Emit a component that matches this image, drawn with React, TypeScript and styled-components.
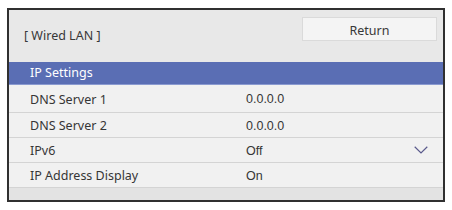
import styled, { createGlobalStyle } from "styled-components";

const GlobalStyle = createGlobalStyle`
    html, body {
        margin: 0;
        padding: 0;
        background: #FFFFFF;
    }
`;

const Page = styled.div`
    padding: 8px 0 0 7px;
`;
const Frame = styled.div`
    width: 434px;
    height: 190px;
    border: 2px solid #303030;
    display: flex;
    flex-direction: column;
    background: #EFEFEF;
    font-family: "Noto Sans", "Open Sans", sans-serif;
`;
const Header = styled.div`
    display: flex;
    justify-content: space-between;
    align-items: flex-start;
    height: 52px;
    padding: 7px 6px 0 15px;
    box-sizing: border-box;
    background: #E8E8E8;
`;
const Title = styled.div`
    margin-top: 12px;
    font-size: 12.5px;
    line-height: 14px;
    color: #383838;
`;
const ReturnButton = styled.button`
    width: 135px;
    height: 24px;
    padding: 0;
    background: #F4F4F4;
    border: 1px solid #DADADA;
    font-family: "Noto Sans", "Open Sans", sans-serif;
    font-size: 12.5px;
    color: #383838;
    padding-top: 2px;
`;
const Section = styled.div`
    height: 22px;
    line-height: 22px;
    padding-left: 21px;
    background: #5A6EB4;
    border-bottom: 1px solid #8A9AD0;
    color: #FFFFFF;
    font-size: 12.5px;
`;
const Row = styled.div<{ $tall?: boolean }>`
    display: grid;
    grid-template-columns: 216px 1fr 40px;
    align-items: center;
    height: ${p => (p.$tall ? 27 : 24)}px;
    padding-left: 21px;
    border-bottom: 1px solid #D4D4D4;
    background: #F1F1F1;
`;
const Label = styled.div`
    font-size: 12.5px;
    color: #363636;
    padding-top: 1px;
`;
const Value = styled.div`
    font-family: "Liberation Sans", Arial, sans-serif;
    font-size: 12.5px;
    color: #363636;
    padding-top: 1px;
`;
const Chevron = styled.svg`
    width: 14px;
    height: 8px;
    margin-left: 11px;
`;
const Footer = styled.div`
    flex: 1;
    background: #E3E3E3;
`;

const rows = [
    { label: "DNS Server 1", value: "0.0.0.0" },
    { label: "DNS Server 2", value: "0.0.0.0" },
    { label: "IPv6", value: "Off", select: true },
    { label: "IP Address Display", value: "On" },
];

function App() {
    return (
        <Page>
            <GlobalStyle />
            <Frame>
                <Header>
                    <Title>[ Wired LAN ]</Title>
                    <ReturnButton>Return</ReturnButton>
                </Header>
                <Section>IP Settings</Section>
                {rows.map((r, i) => (
                    <Row key={r.label} $tall={i === 0}>
                        <Label>{r.label}</Label>
                        <Value>{r.value}</Value>
                        {r.select ? (
                            <Chevron viewBox="0 0 14 8">
                                <path d="M0.7 0.8 L7 7 L13.3 0.8" fill="none" stroke="#5A5A8C" strokeWidth="1.2" />
                            </Chevron>
                        ) : <span />}
                    </Row>
                ))}
                <Footer />
            </Frame>
        </Page>
    );
}

export default App;
